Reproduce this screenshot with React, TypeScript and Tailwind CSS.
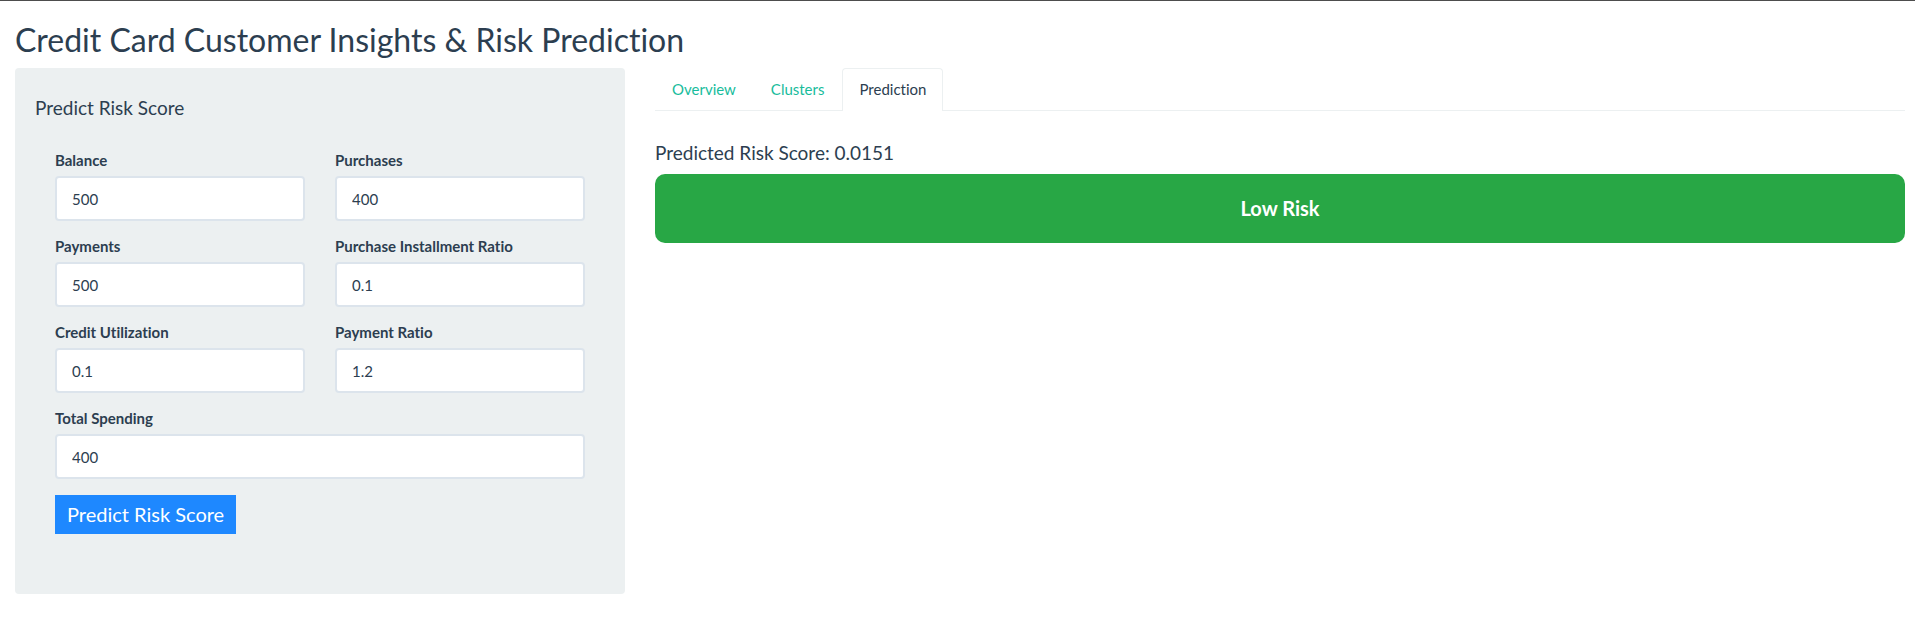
import { useState } from "react";

type FieldProps = {
  id: string;
  label: string;
  initial: string;
  wide?: boolean;
};

const fields: FieldProps[] = [
  { id: "balance", label: "Balance", initial: "500" },
  { id: "purchases", label: "Purchases", initial: "400" },
  { id: "payments", label: "Payments", initial: "500" },
  { id: "installment-ratio", label: "Purchase Installment Ratio", initial: "0.1" },
  { id: "credit-utilization", label: "Credit Utilization", initial: "0.1" },
  { id: "payment-ratio", label: "Payment Ratio", initial: "1.2" },
  { id: "total-spending", label: "Total Spending", initial: "400", wide: true },
];

const tabs = ["Overview", "Clusters", "Prediction"];

function Field({ id, label, initial, wide }: FieldProps) {
  const [value, setValue] = useState(initial);
  return (
    <div className={wide ? "col-span-2 flex flex-col" : "flex flex-col"}>
      <label htmlFor={id} className="h-[25px] leading-[18px] font-bold">
        {label}
      </label>
      <input
        id={id}
        type="text"
        inputMode="decimal"
        value={value}
        onChange={(e) => setValue(e.target.value)}
        className="h-[45px] w-full rounded border-2 border-[#dce4ec] bg-white px-[15px] outline-none focus:border-[#8a9ba8]"
      />
    </div>
  );
}

export default function App() {
  const [active, setActive] = useState("Prediction");

  return (
    <div className="border-t border-[#4d4d4d] bg-white pr-2.5 pl-[15px] font-['Lato',sans-serif] text-[15px] leading-[22px] text-[#2c3e50] [font-variant-ligatures:none]">
      <h1 className="pt-[19px] pb-[9px] text-[32px] leading-[39px]">
        Credit Card Customer Insights &amp; Risk Prediction
      </h1>

      <main className="grid grid-cols-[61fr_125fr] items-start gap-[30px]">
        <form
          className="rounded bg-[#ecf0f1] px-5 pt-7 pb-[60px]"
          onSubmit={(e) => {
            e.preventDefault();
            setActive("Prediction");
          }}
        >
          <h2 className="text-[19px] leading-6">Predict Risk Score</h2>
          <div className="px-5 pt-[31px]">
            <div className="grid grid-cols-2 gap-x-[30px] gap-y-4">
              {fields.map((f) => (
                <Field key={f.id} {...f} />
              ))}
            </div>
            <button
              type="submit"
              className="mt-4 h-[39px] cursor-pointer bg-[#1e88ff] px-3 pb-0.5 text-[20px] text-white"
            >
              Predict Risk Score
            </button>
          </div>
        </form>

        <section>
          <div role="tablist" className="flex gap-px border-b border-[#ecf0f1]">
            {tabs.map((tab) => (
              <button
                key={tab}
                type="button"
                role="tab"
                aria-selected={active === tab}
                onClick={() => setActive(tab)}
                className={
                  active === tab
                    ? "-mb-px h-[43px] cursor-pointer rounded-t border border-b-0 border-[#ecf0f1] bg-white px-4 pb-0.5"
                    : "-mb-px h-[43px] cursor-pointer border border-b-0 border-transparent px-4 pb-0.5 text-[#18bc9c]"
                }
              >
                {tab}
              </button>
            ))}
          </div>
          <h2 className="pt-[30px] pb-[9px] text-[19px] leading-6">
            Predicted Risk Score: 0.0151
          </h2>
          <div
            role="status"
            className="rounded-[10px] bg-[#28a745] p-5 text-center text-[20px] leading-[29px] font-bold text-white"
          >
            Low Risk
          </div>
        </section>
      </main>
    </div>
  );
}
